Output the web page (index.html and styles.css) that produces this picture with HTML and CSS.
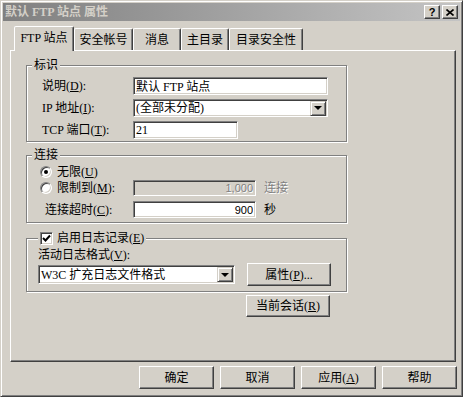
FILE: index.html
```html
<!DOCTYPE html>
<html lang="zh-CN">
<head>
    <meta charset="UTF-8">
    <meta name="viewport" content="width=device-width, initial-scale=1.0">
    <title>默认 FTP 站点 属性</title>
    <link rel="stylesheet" href="styles.css">
</head>
<body>

<div class="window">
    <div class="titlebar">
        <span class="title">默认 FTP 站点 属性</span>
        <div class="caption-buttons">
            <button class="cap-btn">?</button>
            <button class="cap-btn">
                <svg width="8" height="7" viewBox="0 0 8 7"><path d="M0.5 0.5 L7.5 6.5 M7.5 0.5 L0.5 6.5" stroke="#000" stroke-width="1.6"/></svg>
            </button>
        </div>
    </div>

    <div class="tabs">
        <div class="tab tab-site active">FTP 站点</div>
        <div class="tab tab-account">安全帐号</div>
        <div class="tab tab-msg">消息</div>
        <div class="tab tab-home">主目录</div>
        <div class="tab tab-security">目录安全性</div>
    </div>

    <div class="panel">
        <!-- 标识 -->
        <div class="group">
            <div class="group-title">标识</div>
            <div class="group-rows">
                <div class="row">
                    <span class="label">说明(<u>D</u>):</span>
                    <input class="field w-long" value="默认 FTP 站点">
                </div>
                <div class="row">
                    <span class="label">IP 地址(<u>I</u>):</span>
                    <div class="field combo w-long">
                        <span>(全部未分配)</span>
                        <span class="combo-arrow"></span>
                    </div>
                </div>
                <div class="row">
                    <span class="label">TCP 端口(<u>T</u>):</span>
                    <input class="field w-port" value="21">
                </div>
            </div>
        </div>

        <!-- 连接 -->
        <div class="group group-conn">
            <div class="group-title">连接</div>
            <div class="conn-rows">
                <div class="row row-radio">
                    <span class="radio checked"></span>
                    <span>无限(<u>U</u>)</span>
                </div>
                <div class="row row-limit">
                    <span class="label label-radio">
                        <span class="radio"></span>
                        <span>限制到(<u>M</u>):</span>
                    </span>
                    <input class="field num w-num disabled" value="1,000" disabled>
                    <span class="unit disabled-text">连接</span>
                </div>
                <div class="row row-timeout">
                    <span class="label label-timeout">连接超时(<u>C</u>):</span>
                    <input class="field num w-num" value="900">
                    <span class="unit">秒</span>
                </div>
            </div>
        </div>

        <!-- 日志 -->
        <div class="group group-log">
            <div class="group-title log-title">
                <span class="checkbox">
                    <svg width="9" height="9" viewBox="0 0 9 9"><path d="M1 4 L3.5 6.5 L8 1.5" fill="none" stroke="#000" stroke-width="2"/></svg>
                </span>
                <span>启用日志记录(<u>E</u>)</span>
            </div>
            <div class="log-label">活动日志格式(<u>V</u>):</div>
            <div class="log-row">
                <div class="field combo w-log">
                    <span>W3C 扩充日志文件格式</span>
                    <span class="combo-arrow"></span>
                </div>
                <button class="btn btn-props">属性(<u>P</u>)...</button>
            </div>
        </div>

        <button class="btn btn-session">当前会话(<u>R</u>)</button>
    </div>

    <div class="footer">
        <button class="btn btn-footer">确定</button>
        <button class="btn btn-footer">取消</button>
        <button class="btn btn-footer">应用(<u>A</u>)</button>
        <button class="btn btn-footer">帮助</button>
    </div>
</div>

</body>
</html>
```

FILE: styles.css
```css
/* Base */
* {
    box-sizing: border-box;
}
body {
    margin: 0;
    background: #fff;
    font: 12px/14px "Liberation Serif", "Noto Sans CJK SC", serif;
    color: #000;
}
u {
    text-decoration: underline;
}

/* Window frame */
.window {
    width: 463px;
    height: 397px;
    padding: 2px;
    background: #d4d0c8;
    border: 1px solid;
    border-color: #d4d0c8 #404040 #404040 #d4d0c8;
    box-shadow: inset 1px 1px #fff, inset -1px -1px #808080;
    overflow: hidden;
}
.titlebar {
    height: 18px;
    display: flex;
    align-items: center;
    justify-content: space-between;
    padding: 0 2px;
    background: linear-gradient(to right, #808080, #c4c4c4);
}
.title {
    color: #d4d0c8;
    font-weight: bold;
}
.caption-buttons {
    display: flex;
    gap: 2px;
}
.cap-btn {
    width: 16px;
    height: 14px;
    padding: 0;
    display: flex;
    align-items: center;
    justify-content: center;
    background: #d4d0c8;
    border: 1px solid;
    border-color: #fff #404040 #404040 #fff;
    box-shadow: inset -1px -1px #808080;
    font: bold 11px/12px "Liberation Sans", sans-serif;
    color: #000;
}

/* Tabs */
.tabs {
    display: flex;
    align-items: flex-end;
    height: 24px;
    margin-top: 5px;
    padding-left: 11px;
}
.tab {
    height: 22px;
    display: flex;
    align-items: center;
    justify-content: center;
    border: 1px solid;
    border-bottom: 0;
    border-color: #fff #404040 transparent #fff;
    border-radius: 2px 2px 0 0;
    box-shadow: inset -1px 0 #808080;
}
.tab.active {
    height: 25px;
    margin-bottom: -1px;
    padding-bottom: 2px;
    position: relative;
    z-index: 1;
    background: #d4d0c8;
}
.tab-site { width: 60px; }
.tab-account { width: 59px; }
.tab-msg { width: 48px; }
.tab-home { width: 48px; }
.tab-security { width: 74px; }

/* Tab page */
.panel {
    margin-left: 7px;
    width: 446px;
    height: 312px;
    padding: 14px 0 0 15px;
    border: 1px solid;
    border-color: #fff #404040 #404040 #fff;
    box-shadow: inset -1px -1px #808080;
}

/* Group boxes */
.group {
    width: 321px;
    border: 1px solid #808080;
    box-shadow: inset 1px 1px #fff, 1px 1px #fff;
}
.group-title {
    width: fit-content;
    height: 14px;
    margin: -8px 0 0 5px;
    padding: 0 2px;
    background: #d4d0c8;
}
.group-rows {
    display: flex;
    flex-direction: column;
    gap: 4px;
    padding: 5px 0 2px;
}
.row {
    display: flex;
    align-items: center;
    height: 18px;
}
.label {
    width: 106px;
    padding-left: 15px;
    flex-shrink: 0;
}

/* Fields */
.field {
    height: 18px;
    padding: 0 2px;
    background: #fff;
    border: 1px solid;
    border-color: #808080 #fff #fff #808080;
    box-shadow: inset 1px 1px #404040, inset -1px -1px #d4d0c8;
    font: inherit;
    color: #000;
    outline: none;
}
.w-long { width: 195px; }
.w-port { width: 105px; }
.w-num { width: 123px; }
.w-log { width: 197px; }
.num {
    text-align: right;
    font: 11px "Liberation Sans", sans-serif;
}
.field.disabled {
    background: #d4d0c8;
    color: #808080;
    text-shadow: 1px 1px #fff;
}
.combo {
    display: flex;
    align-items: center;
    justify-content: space-between;
    padding: 2px 2px 2px 2px;
}
.combo-arrow {
    width: 16px;
    height: 15px;
    display: flex;
    align-items: center;
    justify-content: center;
    background: #d4d0c8;
    border: 1px solid;
    border-color: #d4d0c8 #404040 #404040 #d4d0c8;
    box-shadow: inset 1px 1px #fff, inset -1px -1px #808080;
    margin-right: -1px;
}
.combo-arrow::after {
    content: "";
    border-left: 4px solid transparent;
    border-right: 4px solid transparent;
    border-top: 4px solid #000;
}

/* 连接 */
.group-conn {
    margin-top: 13px;
}
.conn-rows {
    padding: 2px 0 4px;
}
.row-radio {
    height: 16px;
    gap: 5px;
    padding-left: 13px;
}
.row-limit {
    height: 16px;
}
.row-limit .field {
    height: 16px;
}
.row-timeout {
    height: 17px;
    margin-top: 5px;
}
.row-timeout .field {
    height: 17px;
}
.label-radio {
    display: flex;
    align-items: center;
    gap: 5px;
    padding-left: 13px;
}
.label-timeout {
    padding-left: 18px;
}
.unit {
    margin-left: 8px;
}
.disabled-text {
    color: #808080;
    text-shadow: 1px 1px #fff;
}
.radio {
    width: 12px;
    height: 12px;
    flex-shrink: 0;
    border-radius: 50%;
    background: #fff;
    border: 1px solid;
    border-color: #808080 #fff #fff #808080;
    box-shadow: inset 1px 1px #404040, inset -1px -1px #d4d0c8;
    display: flex;
    align-items: center;
    justify-content: center;
}
.radio.checked::after {
    content: "";
    width: 4px;
    height: 4px;
    border-radius: 50%;
    background: #000;
}

/* 日志 */
.group-log {
    margin-top: 15px;
    padding-bottom: 5px;
}
.log-title {
    display: flex;
    align-items: center;
    gap: 4px;
    margin-left: 11px;
}
.checkbox {
    width: 13px;
    height: 13px;
    display: flex;
    align-items: center;
    justify-content: center;
    background: #fff;
    border: 1px solid;
    border-color: #808080 #fff #fff #808080;
    box-shadow: inset 1px 1px #404040, inset -1px -1px #d4d0c8;
}
.log-label {
    margin-top: 3px;
    padding-left: 11px;
}
.log-row {
    display: flex;
    align-items: center;
    gap: 12px;
    margin-top: 1px;
    padding-left: 11px;
}
.log-row .field {
    height: 19px;
}

/* Buttons */
.btn {
    padding: 0;
    background: #d4d0c8;
    border: 1px solid;
    border-color: #fff #404040 #404040 #fff;
    box-shadow: inset -1px -1px #808080;
    font: inherit;
    color: #000;
}
.btn-props {
    width: 84px;
    height: 23px;
}
.btn-session {
    display: block;
    width: 84px;
    height: 22px;
    margin: 3px 0 0 220px;
}
.footer {
    display: flex;
    justify-content: flex-end;
    gap: 6px;
    margin-top: 4px;
    padding-right: 3px;
}
.btn-footer {
    width: 75px;
    height: 23px;
}
```
